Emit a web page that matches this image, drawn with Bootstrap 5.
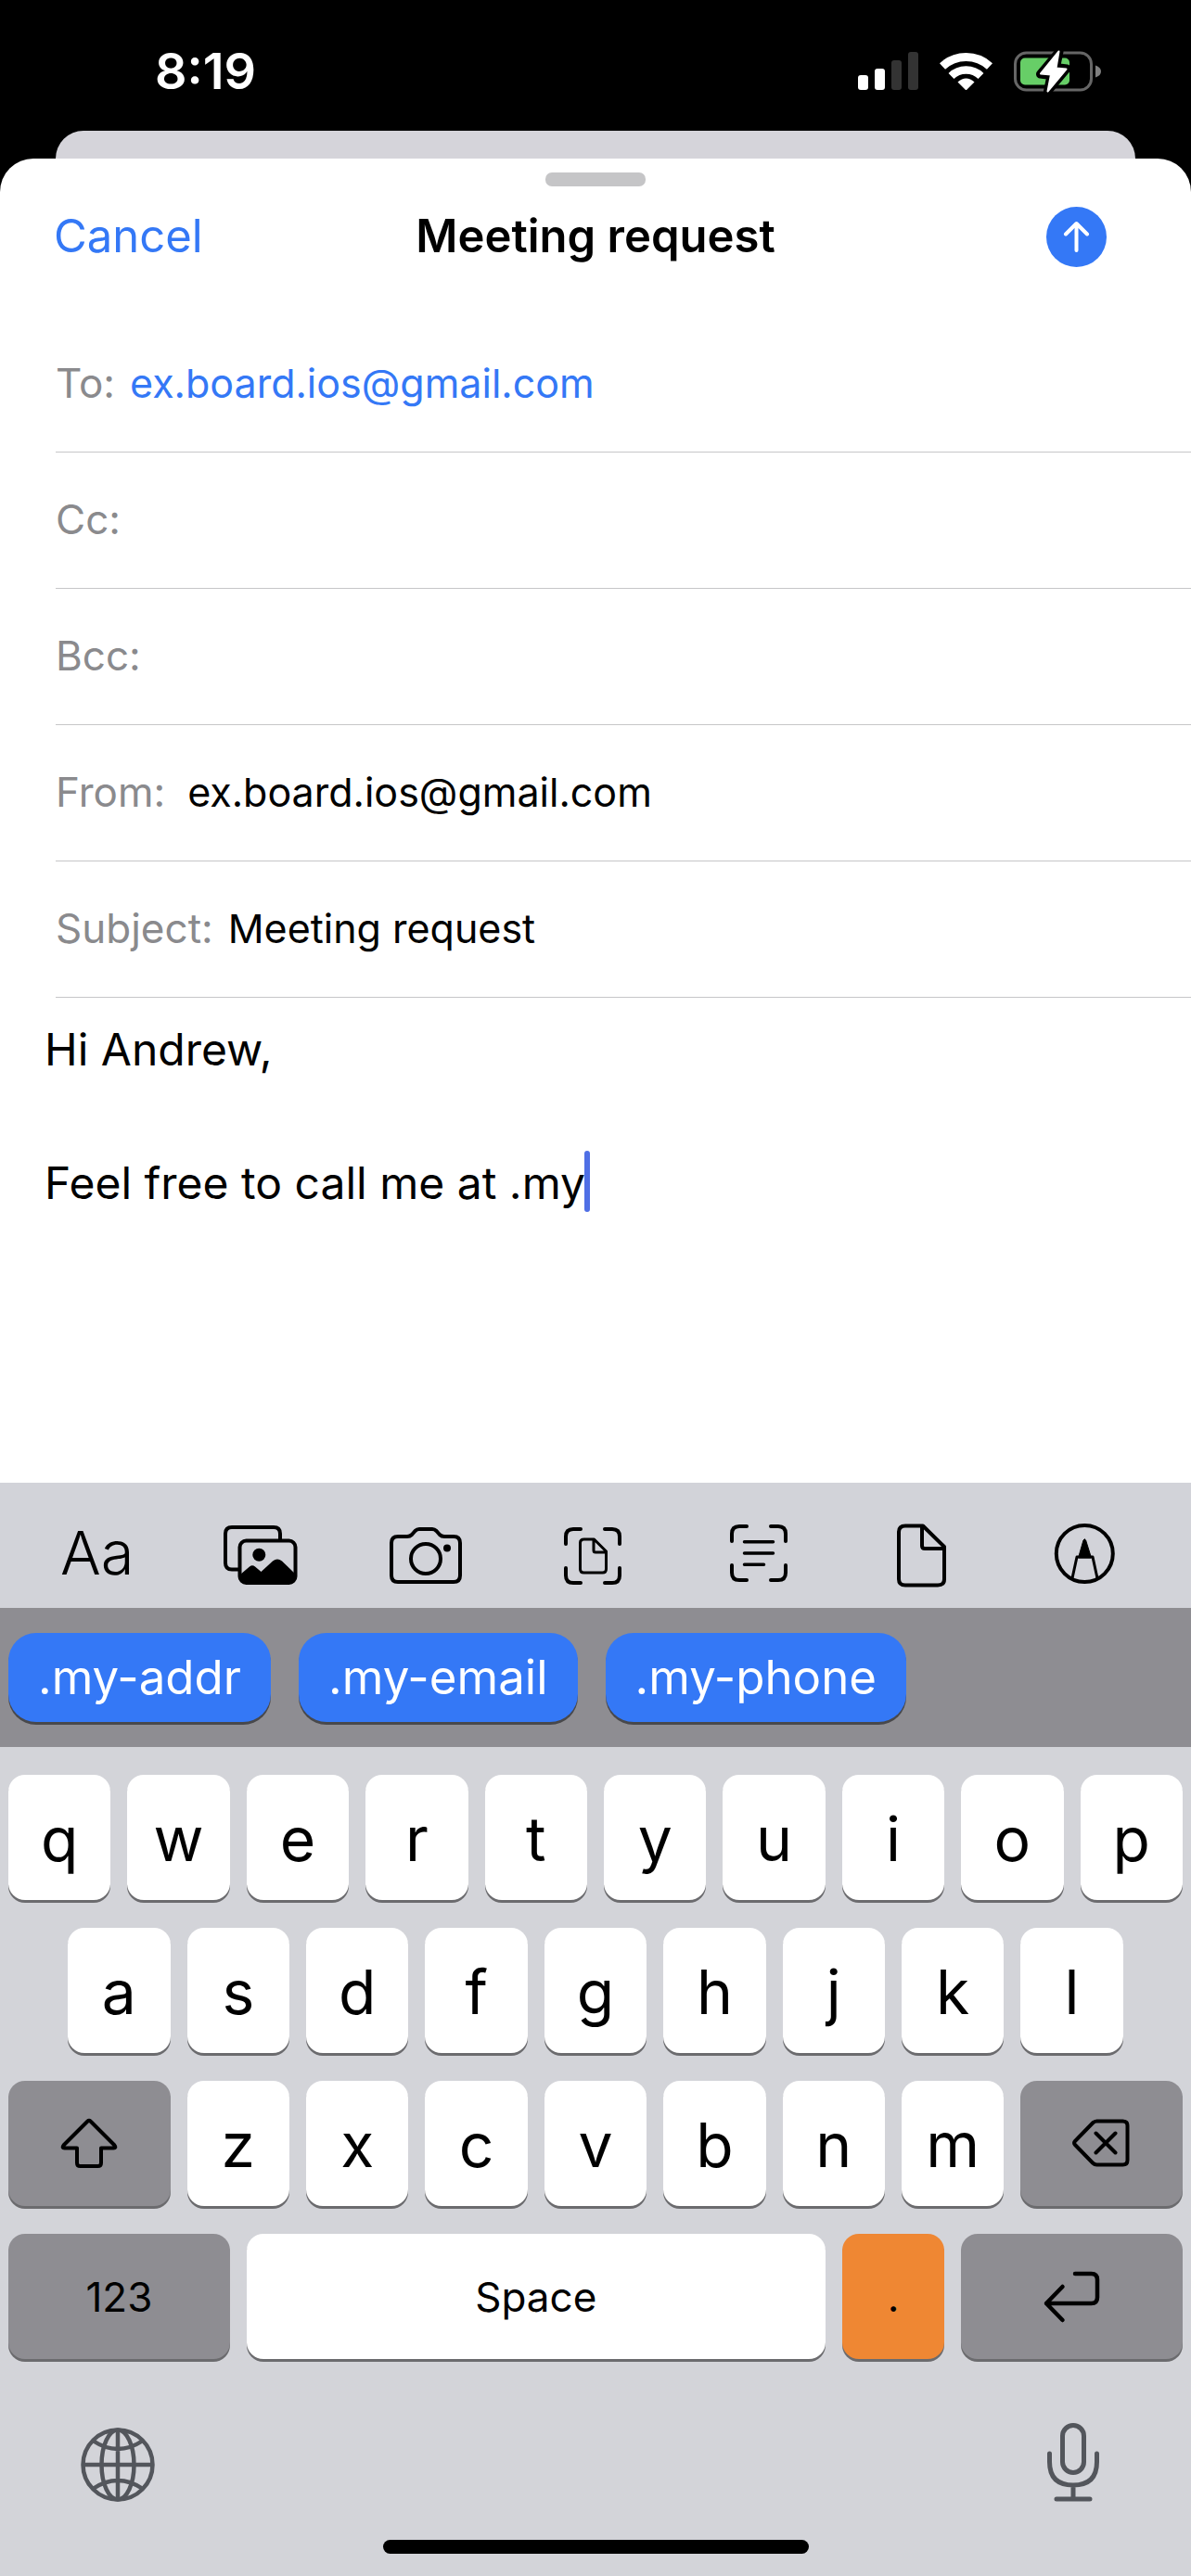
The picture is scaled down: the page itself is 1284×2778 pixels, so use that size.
<!DOCTYPE html>
<html lang="en">
<head>
<meta charset="utf-8">
<meta name="viewport" content="width=device-width, initial-scale=1">
<title>Meeting request</title>
<link rel="stylesheet" href="https://cdn.jsdelivr.net/npm/bootstrap@5.3.0/dist/css/bootstrap.min.css">
<style>
  body { font-family: Inter, "Liberation Sans", sans-serif; background: #000; color: #000; }
  svg { display: block; flex: none; }
  .status { height: 141px; padding: 12px 97px 0 167px; }
  .status-time { font-size: 54px; line-height: 60px; font-weight: 600; }
  .status-icons { gap: 23px; }
  .sheet-behind { height: 30px; margin: 0 60px; background: #d5d4da; border-radius: 32px 32px 0 0; }
  .sheet { padding-top: 15px; border-radius: 36px 36px 0 0; }
  .grabber { width: 108px; height: 15px; border-radius: 7px; background: #c5c5c7; }
  .sheet-head { height: 108px; margin-bottom: 32px; font-size: 49px; line-height: 60px; }
  .btn-cancel { padding: 0 0 0 58px; border: 0; font-size: inherit; line-height: inherit; color: #3478f6; }
  .sheet-title { margin: 0; font-size: inherit; line-height: inherit; font-weight: 600; }
  .btn-send { width: 65px; height: 65px; margin-right: 91px; padding: 0; border: 0; background: #3478f6; }
  .field { height: 147px; margin-left: 60px; padding-bottom: 2px; border-bottom: 1px solid #c6c6c8; font-size: 44px; line-height: 60px; }
  .field label { color: #8a8a8d; }
  .field input { min-width: 0; padding: 0; border: 0; outline: 0; background: none; color: #000; font-size: 43px; }
  .field input.address { color: #3478f6; }
  .message textarea { padding: 20px 48px; border: 0; outline: 0; resize: none; overflow: hidden; font-size: 48px; line-height: 72px; color: #000; }
  .caret { left: 630px; top: 165px; width: 6px; height: 66px; border-radius: 3px; background: #4f6fe5; }
  .tools { height: 135px; padding: 0 26px 0 16px; background: #d2d3d9; }
  .tools button { flex: 1 1 0; padding: 0; border: 0; color: #000; }
  .tools .tool-text { padding-top: 16px; font-size: 65px; line-height: 72px; font-weight: 300; }
  .chips { height: 150px; padding: 0 9px; gap: 30px; background: #8e8d92; }
  .chip { height: 96px; padding: 0 32px; border: 0; border-radius: 30px; background: #3478f6; color: #fff; font-size: 51px; line-height: 60px; box-shadow: 0 3px 0 #48484b; }
  .keyboard { padding: 30px 9px 24px; background: #d3d4d9; }
  .keys { display: grid; grid-template-columns: repeat(20, minmax(0, 1fr)); column-gap: 18px; row-gap: 30px; }
  .key { grid-column: span 2; height: 135px; padding: 3px 0 0; border: 0; border-radius: 18px; background: #fff; color: #000; font-size: 66px; line-height: 72px; box-shadow: 0 3px 0 #6b6b6e; }
  .key-first { grid-column: 2 / span 2; }
  .key-mid { grid-column: span 3; }
  .key-wide { grid-column: span 4; }
  .key-space { grid-column: span 10; }
  .key-small { padding: 0; font-size: 44px; }
  .key-dark { padding: 0; background: #8e8d92; }
  .key-dot { background: #ef8733; }
  .keyboard-foot { height: 195px; padding: 29px 90px 0 78px; }
  .keyboard-foot button { padding: 0; border: 0; color: #53565c; }
  .home-bar { width: 459px; height: 15px; border-radius: 8px; background: #000; }
</style>
<script src="https://cdn.jsdelivr.net/npm/bootstrap@5.3.0/dist/js/bootstrap.bundle.min.js"></script>
</head>
<body>
<div class="d-flex flex-column min-vh-100">
  <header>
    <div class="status d-flex align-items-center justify-content-between text-white">
      <span class="status-time">8:19</span>
      <div class="status-icons d-flex align-items-center">
        <svg width="65" height="42" viewBox="0 0 65 42" aria-label="Signal"><g fill="#fff"><rect y="25" width="11" height="16" rx="3"/><rect x="18" y="18" width="11" height="23" rx="3"/></g><g fill="#333"><rect x="36" y="9" width="11" height="32" rx="3"/><rect x="54" width="11" height="41" rx="3"/></g></svg>
        <svg width="57" height="44" viewBox="0 0 57 44" aria-label="Wi-Fi"><g fill="none" stroke="#fff"><path d="M3 16.500A37.500 37.500 0 0 1 54 16.500" stroke-width="9"/><path d="M12.500 27A23 23 0 0 1 44.500 27" stroke-width="8.500"/></g><path d="M19.500 33.500Q28.500 25.500 37.500 33.500L29.500 41.500Q28.500 42.500 27.500 41.500Z" fill="#fff"/></svg>
        <svg width="94" height="46" viewBox="0 0 94 46" aria-label="Battery charging"><rect x="1.500" y="3" width="82" height="40" rx="12" fill="none" stroke="#666" stroke-width="3"/><rect x="7" y="8.500" width="53" height="29" rx="5" fill="#67ce67"/><path d="M88 16.500Q94 18.500 94 23T88 29.500Z" fill="#808080"/><path d="M49 1.500L28.500 26L40 27.500L36.500 44.500L57 20L45.500 18.500Z" fill="#fff" stroke="#000" stroke-width="9" stroke-linejoin="round"/><path d="M48.500 1.500L29 25.500L40 26.500L36.500 44.500L56.500 20.500L45.500 19.500Z" fill="#fff" stroke="#fff" stroke-width="2" stroke-linejoin="round"/></svg>
      </div>
    </div>
    <div class="sheet-behind"></div>
  </header>

  <main class="sheet bg-white flex-grow-1 d-flex flex-column">
    <div class="grabber mx-auto"></div>
    <div class="sheet-head row g-0 align-items-center">
      <div class="col d-flex"><button type="button" class="btn btn-cancel">Cancel</button></div>
      <h1 class="sheet-title col-auto">Meeting request</h1>
      <div class="col d-flex justify-content-end">
        <button type="button" class="btn btn-send rounded-circle" aria-label="Send"><svg width="65" height="65" viewBox="0 0 65 65" fill="none" stroke="#fff" stroke-width="4" stroke-linecap="round" stroke-linejoin="round"><path d="M32.500 47V18M21 29.500L32.500 18L44 29.500"/></svg></button>
      </div>
    </div>
    <form class="flex-grow-1 d-flex flex-column">
      <div class="field d-flex align-items-center gap-3"><label for="to">To:</label><input id="to" class="address flex-grow-1" type="text" value="ex.board.ios@gmail.com"></div>
      <div class="field d-flex align-items-center gap-3"><label for="cc">Cc:</label><input id="cc" class="flex-grow-1" type="text"></div>
      <div class="field d-flex align-items-center gap-3"><label for="bcc">Bcc:</label><input id="bcc" class="flex-grow-1" type="text"></div>
      <div class="field d-flex align-items-center gap-4"><label for="from">From:</label><input id="from" class="flex-grow-1" type="text" value="ex.board.ios@gmail.com"></div>
      <div class="field d-flex align-items-center gap-3"><label for="subject">Subject:</label><input id="subject" class="flex-grow-1" type="text" value="Meeting request"></div>
      <div class="message position-relative flex-grow-1 d-flex">
        <textarea class="w-100" aria-label="Message" spellcheck="false">Hi Andrew,

Feel free to call me at .my</textarea>
        <span class="caret position-absolute"></span>
      </div>
    </form>
  </main>

  <footer>
    <div class="tools d-flex align-items-center">
      <button type="button" class="btn tool-text">Aa</button>
      <button type="button" class="btn d-flex justify-content-center" aria-label="Photos"><svg width="96" height="96" viewBox="14 -11 96 96" fill="none" stroke="#000" stroke-width="4" stroke-linejoin="round"><path d="M37 62.500H30Q23 62.500 23 55.500V24Q23 17 30 17H75Q82 17 82 24V30"/><rect x="38.500" y="31.500" width="60" height="45.500" rx="7"/><circle cx="59.300" cy="46.700" r="7" fill="#000" stroke="none"/><path d="M39 68L49 59.500Q52 57 55 59.500L61.500 65L74 53.500Q79 49.500 84 53.500L98 67V71Q98 77 91 77H46Q39 77 39 70Z" fill="#000" stroke="none"/></svg></button>
      <button type="button" class="btn d-flex justify-content-center" aria-label="Camera"><svg width="96" height="96" viewBox="192 -11 96 96" fill="none" stroke="#000" stroke-width="4" stroke-linejoin="round"><path d="M209 27H219Q222 27 224 25L227.500 21Q229.500 19 232 19H246Q248.500 19 250.500 21L254 25Q256 27 259 27H269Q276 27 276 34V69Q276 76 269 76H209Q202 76 202 69V34Q202 27 209 27Z"/><circle cx="239" cy="51" r="16"/><circle cx="262" cy="39.500" r="4" fill="#000" stroke="none"/></svg></button>
      <button type="button" class="btn d-flex justify-content-center" aria-label="Scan document"><svg width="96" height="96" viewBox="369 -11 96 96" fill="none" stroke="#000" stroke-width="4" stroke-linecap="round" stroke-linejoin="round"><path d="M390 35V27Q390 19 398 19H406M432 19H440Q448 19 448 27V35M448 61V69Q448 77 440 77H432M406 77H398Q390 77 390 69V61"/><path d="M409 30H420.500L433.500 43V62Q433.500 66 429.500 66H409.500Q405.500 66 405.500 62V34Q405.500 30 409.500 30ZM420 30V42Q420 44 422 44H433" stroke-width="3"/></svg></button>
      <button type="button" class="btn d-flex justify-content-center" aria-label="Scan text"><svg width="96" height="96" viewBox="6 -11 96 96" fill="none" stroke="#000" stroke-width="4" stroke-linecap="round" stroke-linejoin="round"><path d="M29 32V24Q29 16 37 16H45M71 16H79Q87 16 87 24V32M87 58V66Q87 74 79 74H71M45 74H37Q29 74 29 66V58"/><path d="M42.500 32.700H73.500M42.500 45H73.500M42.500 57.300H63.500" stroke-width="3.500"/></svg></button>
      <button type="button" class="btn d-flex justify-content-center" aria-label="Attach file"><svg width="96" height="96" viewBox="184 -11 96 96" fill="none" stroke="#000" stroke-width="4" stroke-linejoin="round"><path d="M216 15.500H235L258 38V73Q258 79.500 251 79.500H216Q209 79.500 209 73V22Q209 15.500 216 15.500ZM234 16V37Q234 40 237 40H258"/></svg></button>
      <button type="button" class="btn d-flex justify-content-center" aria-label="Markup"><svg width="96" height="96" viewBox="361 -11 96 96" fill="none" stroke="#000" stroke-width="4" stroke-linejoin="round"><circle cx="409.300" cy="45.500" r="30.500"/><path d="M402.500 50L408 31Q409.300 28.500 410.600 31L416.500 50Z" fill="#000" stroke-width="1"/><path d="M396 72L401 49H418L423 72" stroke-width="3"/></svg></button>
    </div>
    <div class="chips d-flex align-items-center">
      <button type="button" class="btn chip">.my-addr</button>
      <button type="button" class="btn chip">.my-email</button>
      <button type="button" class="btn chip">.my-phone</button>
    </div>
    <div class="keyboard">
      <div class="keys">
        <button type="button" class="btn key">q</button><button type="button" class="btn key">w</button><button type="button" class="btn key">e</button><button type="button" class="btn key">r</button><button type="button" class="btn key">t</button><button type="button" class="btn key">y</button><button type="button" class="btn key">u</button><button type="button" class="btn key">i</button><button type="button" class="btn key">o</button><button type="button" class="btn key">p</button>
        <button type="button" class="btn key key-first">a</button><button type="button" class="btn key">s</button><button type="button" class="btn key">d</button><button type="button" class="btn key">f</button><button type="button" class="btn key">g</button><button type="button" class="btn key">h</button><button type="button" class="btn key">j</button><button type="button" class="btn key">k</button><button type="button" class="btn key">l</button>
        <button type="button" class="btn key key-mid key-dark d-flex align-items-center justify-content-center" aria-label="Shift"><svg width="66" height="60" viewBox="0 0 66 60" fill="none" stroke="#000" stroke-width="4" stroke-linejoin="round"><path d="M31.500 5.500Q33 4 34.500 5.500L60.500 31.500Q62.500 34.500 59.500 34.500H46V50.500Q46 54 42.500 54H23.500Q20 54 20 50.500V34.500H6.500Q3.500 34.500 5.500 31.500Z"/></svg></button><button type="button" class="btn key">z</button><button type="button" class="btn key">x</button><button type="button" class="btn key">c</button><button type="button" class="btn key">v</button><button type="button" class="btn key">b</button><button type="button" class="btn key">n</button><button type="button" class="btn key">m</button><button type="button" class="btn key key-mid key-dark d-flex align-items-center justify-content-center" aria-label="Delete"><svg width="66" height="60" viewBox="1 1 66 60" fill="none" stroke="#000" stroke-width="4" stroke-linecap="round" stroke-linejoin="round"><path d="M28.500 6.500H56.500Q61.500 6.500 61.500 11.500V48.500Q61.500 53.500 56.500 53.500H28.500Q26 53.500 24 51.500L5 32Q3 30 5 28L24 8.500Q26 6.500 28.500 6.500ZM27.500 19.500L48.500 40.500M48.500 19.500L27.500 40.500"/></svg></button>
        <button type="button" class="btn key key-wide key-dark key-small">123</button><button type="button" class="btn key key-space key-small">Space</button><button type="button" class="btn key key-small key-dot">.</button><button type="button" class="btn key key-wide key-dark d-flex align-items-center justify-content-center" aria-label="Return"><svg width="66" height="60" viewBox="0 0 66 60" fill="none" stroke="#000" stroke-width="4.500" stroke-linecap="round" stroke-linejoin="round"><path d="M36 5H53.500Q60 5 60 11.500V30.500Q60 37 53.500 37H5M22.500 19L5 37L22.500 55"/></svg></button>
      </div>
      <div class="keyboard-foot d-flex align-items-center justify-content-between">
        <button type="button" class="btn" aria-label="Next keyboard"><svg width="80" height="84" viewBox="0 -4 80 84" fill="none" stroke="#53565c" stroke-width="4.500"><circle cx="40" cy="40" r="37.500"/><ellipse cx="40" cy="40" rx="17.500" ry="37.500"/><path d="M40 2.500V77.500M2.500 40H77.500M13 14Q40 32 67 14M13 66Q40 48 67 66"/></svg></button>
        <button type="button" class="btn" aria-label="Dictation"><svg width="56" height="86" viewBox="0 1 56 86" fill="none" stroke="#53565c" stroke-width="5" stroke-linecap="round"><rect x="16.500" y="3.500" width="23" height="51" rx="11.500"/><path d="M2.500 34V43Q2.500 68 28 68T53.500 43V34M28 68V82M10 83H46"/></svg></button>
      </div>
      <div class="home-bar mx-auto"></div>
    </div>
  </footer>
</div>
</body>
</html>
